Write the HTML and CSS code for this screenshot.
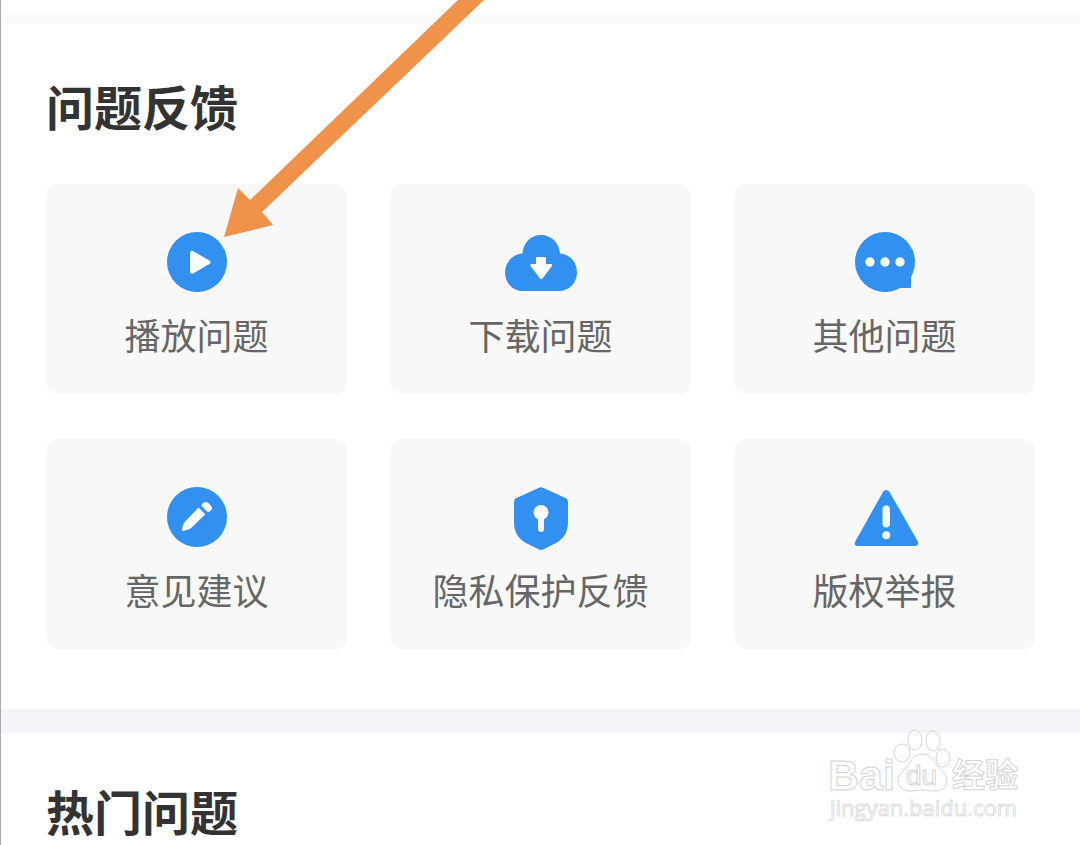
FILE: index.html
```html
<!DOCTYPE html>
<html lang="zh-CN">
<head>
    <meta charset="UTF-8">
    <meta name="viewport" content="width=device-width, initial-scale=1.0">
    <title>问题反馈</title>
    <link rel="stylesheet" href="styles.css">
</head>
<body>
    <div class="page">
        <div class="top-bar"></div>

        <main>
            <section class="feedback">
                <h2>问题反馈</h2>
                <div class="card-grid">
                    <button type="button" class="card">
                        <svg class="icon" viewBox="0 0 72 64" aria-hidden="true">
                            <circle cx="36" cy="32" r="30"/>
                            <path class="cut" d="M29 23.500Q29 19.500 32.500 21.300L48 30.300Q51 32.300 48 34.300L32.500 43.300Q29 45 29 41Z"/>
                        </svg>
                        <span>播放问题</span>
                    </button>
                    <button type="button" class="card">
                        <svg class="icon" viewBox="0 0 72 64" aria-hidden="true">
                            <path d="M18 61C8 61 0 53 0 42.500C0 32 8 24 17.500 23.500C18 13 26 5 36 5C46 5 54.500 13 55 23.500C64.500 24 72 32 72 42.500C72 53 64 61 54 61Z"/>
                            <path class="cut" d="M31 28Q31 27 32 27H40Q41 27 41 28V34H46.500Q48 34.500 47 36L37.500 48.500Q36.300 50 35 48.500L25.500 36Q24.500 34.500 26 34H31Z"/>
                        </svg>
                        <span>下载问题</span>
                    </button>
                    <button type="button" class="card">
                        <svg class="icon" viewBox="0 0 72 64" aria-hidden="true">
                            <circle cx="36" cy="32" r="30"/>
                            <path d="M62 45V56.500Q62 58 60.500 58H48Z"/>
                            <circle class="cut" cx="21" cy="32" r="4.700"/>
                            <circle class="cut" cx="36" cy="32" r="4.700"/>
                            <circle class="cut" cx="51" cy="32" r="4.700"/>
                        </svg>
                        <span>其他问题</span>
                    </button>
                    <button type="button" class="card">
                        <svg class="icon" viewBox="0 0 72 64" aria-hidden="true">
                            <circle cx="36" cy="32" r="30"/>
                            <path class="cut" d="M21 44.500L22 40Q22.400 38.300 23.700 37L37.500 22.500L44.300 29.200L30.500 42.800Q29.500 43.800 28 44.300L22.500 45.900Q20.700 46 21 44.500Z"/>
                            <path class="cut" d="M40 20.300L42 18Q44.500 15.700 47.500 18.200L49.700 20.500Q52 23.500 50 25.500L47 27.500Z"/>
                        </svg>
                        <span>意见建议</span>
                    </button>
                    <button type="button" class="card">
                        <svg class="icon" viewBox="0 0 72 64" aria-hidden="true">
                            <path d="M34 2.700Q36 1.700 38 2.700L61 13.300Q63 14.500 63 17V37C63 48 58 54 51 58L38 64.500Q36 65.400 34 64.500L21 58C14 54 9 48 9 37V17Q9 14.500 11 13.300Z"/>
                            <circle class="cut" cx="36" cy="27.500" r="7.500"/>
                            <rect class="cut" x="33" y="30" width="6" height="17" rx="3"/>
                        </svg>
                        <span>隐私保护反馈</span>
                    </button>
                    <button type="button" class="card">
                        <svg class="icon" viewBox="0 0 72 64" aria-hidden="true">
                            <path d="M34 7Q37.300 3 40.500 7L68.500 56Q70.500 61 66 61H9.500Q4 61 6.500 56Z"/>
                            <rect class="cut" x="33.500" y="20.500" width="7.500" height="22" rx="3.700"/>
                            <circle class="cut" cx="37.300" cy="50.300" r="4"/>
                        </svg>
                        <span>版权举报</span>
                    </button>
                </div>
            </section>

            <section class="hot">
                <h2>热门问题</h2>
            </section>
        </main>

        <!-- pointer to the playback card -->
        <svg class="pointer" viewBox="0 0 260 237" aria-hidden="true">
            <path d="M0 237L14 188L26 200L234 0H260L38 212L49 225Z"/>
        </svg>

        <!-- watermark -->
        <svg class="watermark" viewBox="0 0 200 100" aria-hidden="true">
            <text class="wm-brand" x="3" y="65">Bai</text>
            <ellipse cx="90" cy="15" rx="7" ry="10"/>
            <ellipse cx="108" cy="16" rx="7" ry="10"/>
            <ellipse cx="77" cy="28" rx="8" ry="9"/>
            <ellipse cx="118" cy="33" rx="7" ry="9"/>
            <path d="M97 29C104 29 108 34 111 39C115 45 122 48 122 56C122 62 117 66 110 66C105 66 102 65 97 65C92 65 89 66 84 66C77 66 73 61 73 56C73 49 80 45 84 39C87 34 90 29 97 29Z"/>
            <text class="wm-du" x="81" y="60">du</text>
            <text class="wm-cn" x="127" y="62">经验</text>
            <text class="wm-url" x="5" y="91">jingyan.baidu.com</text>
        </svg>
    </div>
</body>
</html>
```
FILE: styles.css
```css
* {
    box-sizing: border-box;
}
body {
    margin: 0;
    font-family: "Noto Sans CJK SC", sans-serif;
    background: #fff;
}
.page {
    position: relative;
    overflow: hidden;
    border-left: 1px solid #aaa;
}
.top-bar {
    height: 24px;
    border-bottom: 9px solid #fafafa;
}
h2 {
    margin: 0;
    font-size: 48px;
    line-height: 60px;
    font-weight: 700;
    color: #333;
}
.feedback {
    padding: 51px 45px 60px;
    border-bottom: 24px solid #f4f5fa;
}
.hot {
    padding: 47px 45px 5px;
}
.card-grid {
    display: grid;
    grid-template-columns: repeat(3, 1fr);
    gap: 45px 43px;
    margin-top: 49px;
}
.card {
    display: flex;
    flex-direction: column;
    align-items: center;
    gap: 16px;
    padding: 46px 0 36px;
    border: 0;
    border-radius: 12px;
    background: #f8f8f8;
    font-family: inherit;
    font-size: 36px;
    line-height: 48px;
    color: #666;
    cursor: pointer;
}
.icon {
    width: 72px;
    height: 64px;
    overflow: visible;
    fill: #3190f0;
}
.icon .cut {
    fill: #f8fbff;
}
.pointer {
    position: absolute;
    top: 0;
    left: 223px;
    width: 260px;
    fill: #f1924b;
    pointer-events: none;
}
.watermark {
    position: absolute;
    right: 55px;
    bottom: 20px;
    width: 200px;
    fill: #fff;
    stroke: #d4d4d4;
    stroke-width: 1px;
    pointer-events: none;
}
.wm-brand {
    font: bold 43px "Liberation Sans", sans-serif;
}
.wm-du {
    font: 28px "Liberation Sans", sans-serif;
}
.wm-cn {
    font: bold 33px "Noto Sans CJK SC", sans-serif;
}
.wm-url {
    font: 22px "Open Sans", sans-serif;
    stroke: #dedede;
}
```
